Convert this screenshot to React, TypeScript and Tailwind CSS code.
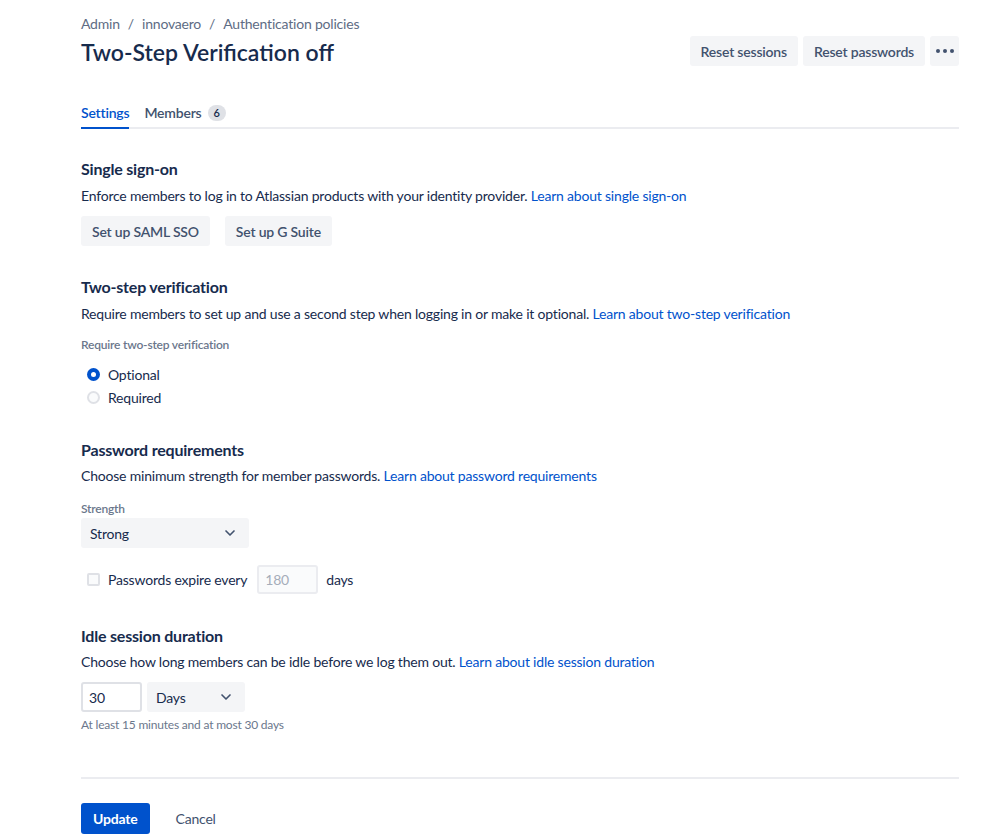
import { ChevronDown } from 'lucide-react';

const font = { fontFamily: 'Lato, "Noto Sans", sans-serif' };

function Link({ children }: { children: React.ReactNode }) {
  return <a className="text-[#0052cc] cursor-pointer">{children}</a>;
}

function GrayButton({ children, className = '' }: { children: React.ReactNode; className?: string }) {
  return (
    <button
      className={`h-[30px] rounded-[3px] bg-[#f4f5f7] px-[11px] text-[14px] font-semibold text-[#42526e] ${className}`}
    >
      {children}
    </button>
  );
}

function Select({ value, className = '' }: { value: string; className?: string }) {
  return (
    <div
      className={`flex h-[30px] items-center justify-between rounded-[3px] bg-[#f4f5f7] pl-[9px] pr-[11px] text-[14px] text-[#172b4d] ${className}`}
    >
      <span>{value}</span>
      <ChevronDown className="h-4 w-4 text-[#42526e]" strokeWidth={2.5} />
    </div>
  );
}

function Radio({ checked, label }: { checked: boolean; label: string }) {
  return (
    <label className="flex h-[23px] items-center gap-[3px] text-[14px] text-[#172b4d]">
      <span className="flex w-6 justify-center">
        {checked ? (
          <span className="flex h-[13px] w-[13px] items-center justify-center rounded-full bg-[#0052cc]">
            <span className="h-[5px] w-[5px] rounded-full bg-white" />
          </span>
        ) : (
          <span className="h-[13px] w-[13px] rounded-full border-2 border-[#dfe1e6] bg-[#fafbfc]" />
        )}
      </span>
      {label}
    </label>
  );
}

export default function App() {
  return (
    <div className="min-h-[840px] bg-white tracking-[-0.2px] text-[#172b4d]" style={font}>
      <div className="mx-[81px] w-[878px] pt-[14px]">
        <div className="flex items-start justify-between">
          <div>
            <nav className="flex items-center gap-[8px] text-[14px] leading-[20px] text-[#5e6c84]">
              <span>Admin</span>
              <span>/</span>
              <span>innovaero</span>
              <span>/</span>
              <span>Authentication policies</span>
            </nav>
            <h1 className="mt-[4px] text-[23px] font-semibold leading-[28px] tracking-normal text-[#172b4d]">
              Two-Step Verification off
            </h1>
          </div>
          <div className="mt-[22px] flex gap-[5px]">
            <GrayButton>Reset sessions</GrayButton>
            <GrayButton>Reset passwords</GrayButton>
            <button className="flex h-[30px] w-[29px] items-center justify-center gap-[3px] rounded-[3px] bg-[#f4f5f7]">
              <span className="h-[4px] w-[4px] rounded-full bg-[#42526e]" />
              <span className="h-[4px] w-[4px] rounded-full bg-[#42526e]" />
              <span className="h-[4px] w-[4px] rounded-full bg-[#42526e]" />
            </button>
          </div>
        </div>

        <div className="mt-[36px] flex border-b-2 border-[#ebecf0]">
          <div className="-mb-[2px] border-b-2 border-[#0052cc] pb-[4px] text-[14px] font-semibold text-[#0052cc]">
            Settings
          </div>
          <div className="ml-[15px] flex items-center gap-[6px] pb-[4px] text-[14px] font-semibold text-[#42526e]">
            Members
            <span className="rounded-full bg-[#dfe1e6] px-[6px] text-[11px] leading-[16px] text-[#172b4d]">6</span>
          </div>
        </div>

        <section className="mt-[28px]">
          <h2 className="text-[16px] font-bold leading-[24px]">Single sign-on</h2>
          <p className="mt-[5px] text-[14px] leading-[20px] text-[#172b4d]">
            Enforce members to log in to Atlassian products with your identity provider.{' '}
            <Link>Learn about single sign-on</Link>
          </p>
          <div className="mt-[10px] flex gap-[15px]">
            <GrayButton>Set up SAML SSO</GrayButton>
            <GrayButton>Set up G Suite</GrayButton>
          </div>
        </section>

        <section className="mt-[29px]">
          <h2 className="text-[16px] font-bold leading-[24px]">Two-step verification</h2>
          <p className="mt-[5px] text-[14px] leading-[20px]">
            Require members to set up and use a second step when logging in or make it optional.{' '}
            <Link>Learn about two-step verification</Link>
          </p>
          <div className="mt-[13px] text-[12px] font-semibold leading-[16px] text-[#6b778c]">
            Require two-step verification
          </div>
          <div className="mt-[10px] flex flex-col">
            <Radio checked label="Optional" />
            <Radio checked={false} label="Required" />
          </div>
        </section>

        <section className="mt-[29px]">
          <h2 className="text-[16px] font-bold leading-[24px]">Password requirements</h2>
          <p className="mt-[4px] text-[14px] leading-[20px]">
            Choose minimum strength for member passwords. <Link>Learn about password requirements</Link>
          </p>
          <div className="mt-[15px] text-[12px] font-semibold leading-[16px] text-[#6b778c]">Strength</div>
          <Select value="Strong" className="mt-[1px] w-[168px]" />
          <div className="mt-[17px] flex items-center text-[14px]">
            <span className="ml-[6px] h-[13px] w-[13px] rounded-[2px] border-2 border-[#dfe1e6] bg-[#fafbfc]" />
            <span className="ml-[8px]">Passwords expire every</span>
            <input
              readOnly
              value="180"
              className="ml-[10px] h-[29px] w-[61px] rounded-[3px] border-2 border-[#ebecf0] bg-[#fafbfc] px-[6px] text-[14px] text-[#a5adba] outline-none"
            />
            <span className="ml-[8px]">days</span>
          </div>
        </section>

        <section className="mt-[30px]">
          <h2 className="text-[16px] font-bold leading-[24px]">Idle session duration</h2>
          <p className="mt-[4px] text-[14px] leading-[20px]">
            Choose how long members can be idle before we log them out. <Link>Learn about idle session duration</Link>
          </p>
          <div className="mt-[10px] flex gap-[5px]">
            <input
              readOnly
              value="30"
              className="h-[30px] w-[61px] rounded-[3px] border-2 border-[#dfe1e6] bg-white px-[6px] text-[14px] text-[#172b4d] outline-none"
            />
            <Select value="Days" className="w-[98px]" />
          </div>
          <p className="mt-[5px] text-[12px] leading-[16px] text-[#6b778c]">At least 15 minutes and at most 30 days</p>
        </section>

        <div className="mt-[44px] border-t-2 border-[#ebecf0]" />

        <div className="mt-[24px] flex items-center gap-[4px]">
          <button className="h-[31px] rounded-[3px] bg-[#0052cc] px-[12px] text-[14px] font-bold text-white">
            Update
          </button>
          <button className="h-[31px] px-[22px] text-[14px] text-[#42526e]">Cancel</button>
        </div>
      </div>
    </div>
  );
}
